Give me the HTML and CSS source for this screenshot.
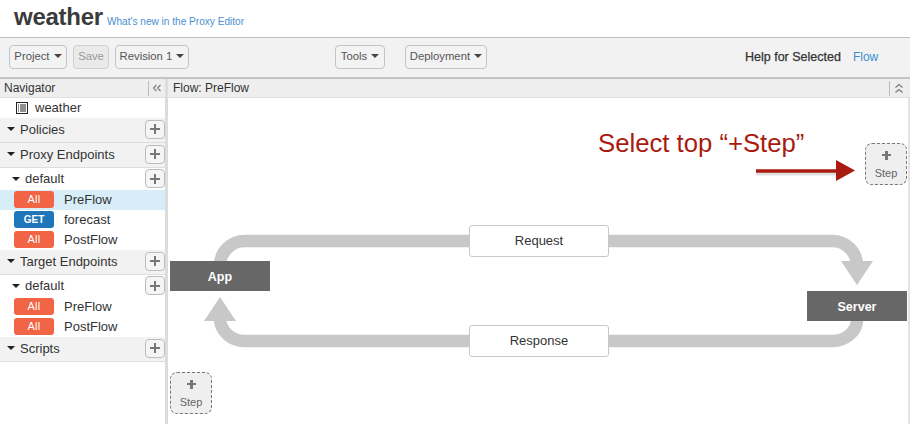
FILE: index.html
```html
<!DOCTYPE html>
<html lang="en">
<head>
<meta charset="utf-8">
<title>weather</title>
<link rel="stylesheet" href="styles.css">
</head>
<body>
<header class="title-bar">
  <h1 class="title">weather</h1>
  <a class="whats-new">What's new in the Proxy Editor</a>
</header>
<div class="toolbar">
  <div class="btn-group group-project">
    <button class="btn btn-project">Project <i class="caret"></i></button>
    <button class="btn btn-save" disabled>Save</button>
    <button class="btn btn-revision">Revision 1 <i class="caret"></i></button>
  </div>
  <button class="btn btn-tools">Tools <i class="caret"></i></button>
  <button class="btn btn-deploy">Deployment <i class="caret"></i></button>
  <div class="help"><b>Help for Selected</b><a>Flow</a></div>
</div>
<div class="workspace">
  <aside class="nav">
    <div class="panel-head nav-head">
      <span class="panel-title">Navigator</span>
      <span class="collapse"><svg width="10" height="8" viewBox="0 0 10 8"><path d="M4.5 1 1.5 4l3 3M8.5 1l-3 3 3 3" fill="none" stroke="#777" stroke-width="1.1"/></svg></span>
    </div>
    <div class="row row-proxy">
      <svg class="list-icon" width="12" height="12" viewBox="0 0 12 12"><rect x=".5" y=".5" width="11" height="11" fill="none" stroke="#222"/><path d="M2 3h1M4 3h6M2 5h1M4 5h6M2 7h1M4 7h6M2 9h1M4 9h6" stroke="#222"/></svg>
      <span>weather</span>
    </div>
    <div class="row section"><i class="tri"></i><span>Policies</span><span class="add"></span></div>
    <div class="row section"><i class="tri"></i><span>Proxy Endpoints</span><span class="add"></span></div>
    <div class="row sub"><i class="tri"></i><span>default</span><span class="add"></span></div>
    <div class="row flow selected"><span class="badge all">All</span><span>PreFlow</span></div>
    <div class="row flow"><span class="badge get">GET</span><span>forecast</span></div>
    <div class="row flow"><span class="badge all">All</span><span>PostFlow</span></div>
    <div class="row section"><i class="tri"></i><span>Target Endpoints</span><span class="add"></span></div>
    <div class="row sub"><i class="tri"></i><span>default</span><span class="add"></span></div>
    <div class="row flow"><span class="badge all">All</span><span>PreFlow</span></div>
    <div class="row flow"><span class="badge all">All</span><span>PostFlow</span></div>
    <div class="row section"><i class="tri"></i><span>Scripts</span><span class="add"></span></div>
  </aside>
  <main class="main">
    <div class="panel-head main-head">
      <span class="panel-title">Flow: PreFlow</span>
      <span class="collapse"><svg width="10" height="11" viewBox="0 0 10 11"><path d="M1.5 4.5 5 1.5l3.5 3M1.5 9.5 5 6.5l3.5 3" fill="none" stroke="#777" stroke-width="1.1"/></svg></span>
    </div>
    <div class="canvas">
      <svg class="wires" width="742" height="326" viewBox="168 98 742 326">
        <path d="M220 262V266C220 252 231 241 245 241H832C846 241 857 252 857 266" fill="none" stroke="#c8c8c8" stroke-width="12.5"/>
        <path d="M841 261H873L857 285Z" fill="#c8c8c8"/>
        <path d="M857 320C857 331 846 341 832 341H245C231 341 220 331 220 318" fill="none" stroke="#c8c8c8" stroke-width="12.5"/>
        <path d="M204 321H236L220 297Z" fill="#c8c8c8"/>
        <path d="M756 173.5H836" stroke="#000" stroke-opacity=".12" stroke-width="4"/>
        <path d="M756 171H838" stroke="#a91a10" stroke-width="3.5"/>
        <path d="M836 160 855 170.5 836 181Z" fill="#a91a10"/>
      </svg>
      <div class="node node-app">App</div>
      <div class="node node-server">Server</div>
      <div class="label label-request">Request</div>
      <div class="label label-response">Response</div>
      <div class="step step-top"><span class="step-plus"></span><span>Step</span></div>
      <div class="step step-bottom"><span class="step-plus"></span><span>Step</span></div>
      <div class="callout">Select top “+Step”</div>
    </div>
  </main>
</div>
</body>
</html>
```

FILE: styles.css
```css
* { box-sizing: border-box; }
html, body { margin: 0; height: 100%; }
body {
  width: 910px;
  height: 424px;
  overflow: hidden;
  font-family: "Liberation Sans", Arial, sans-serif;
  color: #333;
  background: #fff;
  display: flex;
  flex-direction: column;
}
a { color: #3a8ecf; }

.title-bar {
  height: 38px;
  flex: none;
  display: flex;
  align-items: baseline;
  padding: 2px 0 0 14px;
  border-bottom: 1px solid #bdbdbd;
}
.title { margin: 0; font-size: 24px; line-height: 30px; font-weight: 700; color: #3b3b3b; letter-spacing: -.25px; }
.whats-new { margin-left: 4px; font-size: 10.1px; color: #4a90d0; }

.toolbar {
  height: 41px;
  flex: none;
  display: flex;
  align-items: center;
  padding: 0 0 1px 9px;
  background: #f2f2f2;
  border-bottom: 2px solid #c4c4c4;
}
.btn-group { display: flex; gap: 6px; }
.btn {
  height: 24px;
  padding: 0 0 2px;
  font: 11.3px "Liberation Sans", Arial, sans-serif;
  color: #555;
  background: #f3f3f3;
  border: 1px solid #bfc5c8;
  border-radius: 4px;
  text-align: center;
  white-space: nowrap;
}
.btn-project { width: 58px; }
.btn-save { width: 36px; color: #999; background: #eaeaea; border-color: #d0d0d0; }
.btn-revision { width: 74px; }
.btn-tools { width: 50px; margin-left: 146px; }
.btn-deploy { width: 82px; margin-left: 20px; }
.caret {
  display: inline-block;
  vertical-align: 2px;
  margin-left: 1px;
  border-left: 4px solid transparent;
  border-right: 4px solid transparent;
  border-top: 4px solid #444;
}
.help { margin-left: 258px; font-size: 12.5px; color: #333; display: flex; gap: 12px; }
.help b { font-weight: 400; -webkit-text-stroke: .25px #333; }
.help a { color: #3a8ecf; font-size: 12px; }

.workspace { flex: 1; display: flex; min-height: 0; }

.panel-head {
  height: 19px;
  display: flex;
  align-items: center;
  background: #eeeeee;
  border-bottom: 1px solid #e0e0e0;
  font-size: 12px;
  color: #333;
}
.panel-title { flex: 1; padding-left: 4px; }
.collapse {
  width: 17px;
  height: 15px;
  display: flex;
  align-items: center;
  justify-content: center;
  border-left: 1px solid #bbb;
}

.nav {
  width: 168px;
  flex: none;
  border-right: 3px solid #dcdcdc;
  font-size: 13px;
  color: #333;
}

.row { display: flex; align-items: center; }
.row-proxy { height: 20px; padding: 0 0 1px 16px; gap: 7px; }
.section {
  height: 25px;
  padding: 0 0 2px 7px;
  background: #f2f2f2;
  border-bottom: 1px solid #dedede;
}
.section .tri { margin-right: 5px; }
.sub { height: 22px; padding: 0 0 1px 12px; }
.sub .tri { margin-right: 5px; }
.tri {
  width: 0;
  height: 0;
  border-left: 4px solid transparent;
  border-right: 4px solid transparent;
  border-top: 4px solid #222;
}
.add {
  position: relative;
  margin-left: auto;
  width: 20px;
  height: 19px;
  background: #f5f5f5;
  border: 1px solid #b9bec0;
  border-radius: 4px;
}
.add::before {
  content: "";
  position: absolute;
  left: 4px; top: 7.5px;
  width: 10px; height: 2px;
  background: #777;
}
.add::after {
  content: "";
  position: absolute;
  left: 8px; top: 3.5px;
  width: 2px; height: 10px;
  background: #777;
}

.flow { height: 20px; padding: 0 0 1px 14px; gap: 10px; }
.selected { background: #d7eef8; }
.badge {
  width: 40px;
  height: 17px;
  border-radius: 3px;
  color: #fff;
  font-size: 10px;
  font-weight: 700;
  line-height: 17px;
  text-align: center;
}
.all { background: #f26446; font-weight: 400; font-size: 11px; letter-spacing: .3px; }
.get { background: #1f76ba; }

.main { flex: 1; display: flex; flex-direction: column; min-width: 0; border-right: 2px solid #e4e4e4; }
.main-head { padding-right: 2px; margin-right: -2px; }
.main-head .panel-title { padding-left: 5px; }
.main-head .collapse { width: 19px; }
.canvas { position: relative; flex: 1; background: #fff; }
.wires { position: absolute; left: 0; top: 0; }

.node {
  position: absolute;
  width: 100px;
  height: 30px;
  background: #676767;
  color: #fff;
  font-size: 12.5px;
  font-weight: 700;
  line-height: 32px;
  text-align: center;
}
.node-app { left: 2px; top: 163px; }
.node-server { left: 639px; top: 193px; }

.label {
  position: absolute;
  left: 301px;
  width: 140px;
  height: 32px;
  background: #fff;
  border: 1px solid #c8c8c8;
  border-radius: 3px;
  color: #333;
  font-size: 13px;
  line-height: 30px;
  text-align: center;
}
.label-request { top: 127px; }
.label-response { top: 227px; }

.step {
  position: absolute;
  width: 42px;
  height: 42px;
  background: #efefef;
  border: 1px dashed #777;
  border-radius: 7px;
  color: #666;
  font-size: 11px;
  text-align: center;
  padding-top: 23px;
  line-height: 12px;
}
.step-plus { position: absolute; left: 11px; top: 4px; width: 19px; height: 16px; }
.step-plus::before {
  content: "";
  position: absolute;
  left: 5px; top: 6px;
  width: 9px; height: 2.4px;
  background: #777;
}
.step-plus::after {
  content: "";
  position: absolute;
  left: 8.3px; top: 2.7px;
  width: 2.4px; height: 9px;
  background: #777;
}
.step-top { left: 697px; top: 45px; }
.step-bottom { left: 2px; top: 274px; }

.callout {
  position: absolute;
  left: 430px;
  top: 30px;
  font-size: 25.7px;
  line-height: 30px;
  color: #a91a10;
  white-space: nowrap;
}
```
